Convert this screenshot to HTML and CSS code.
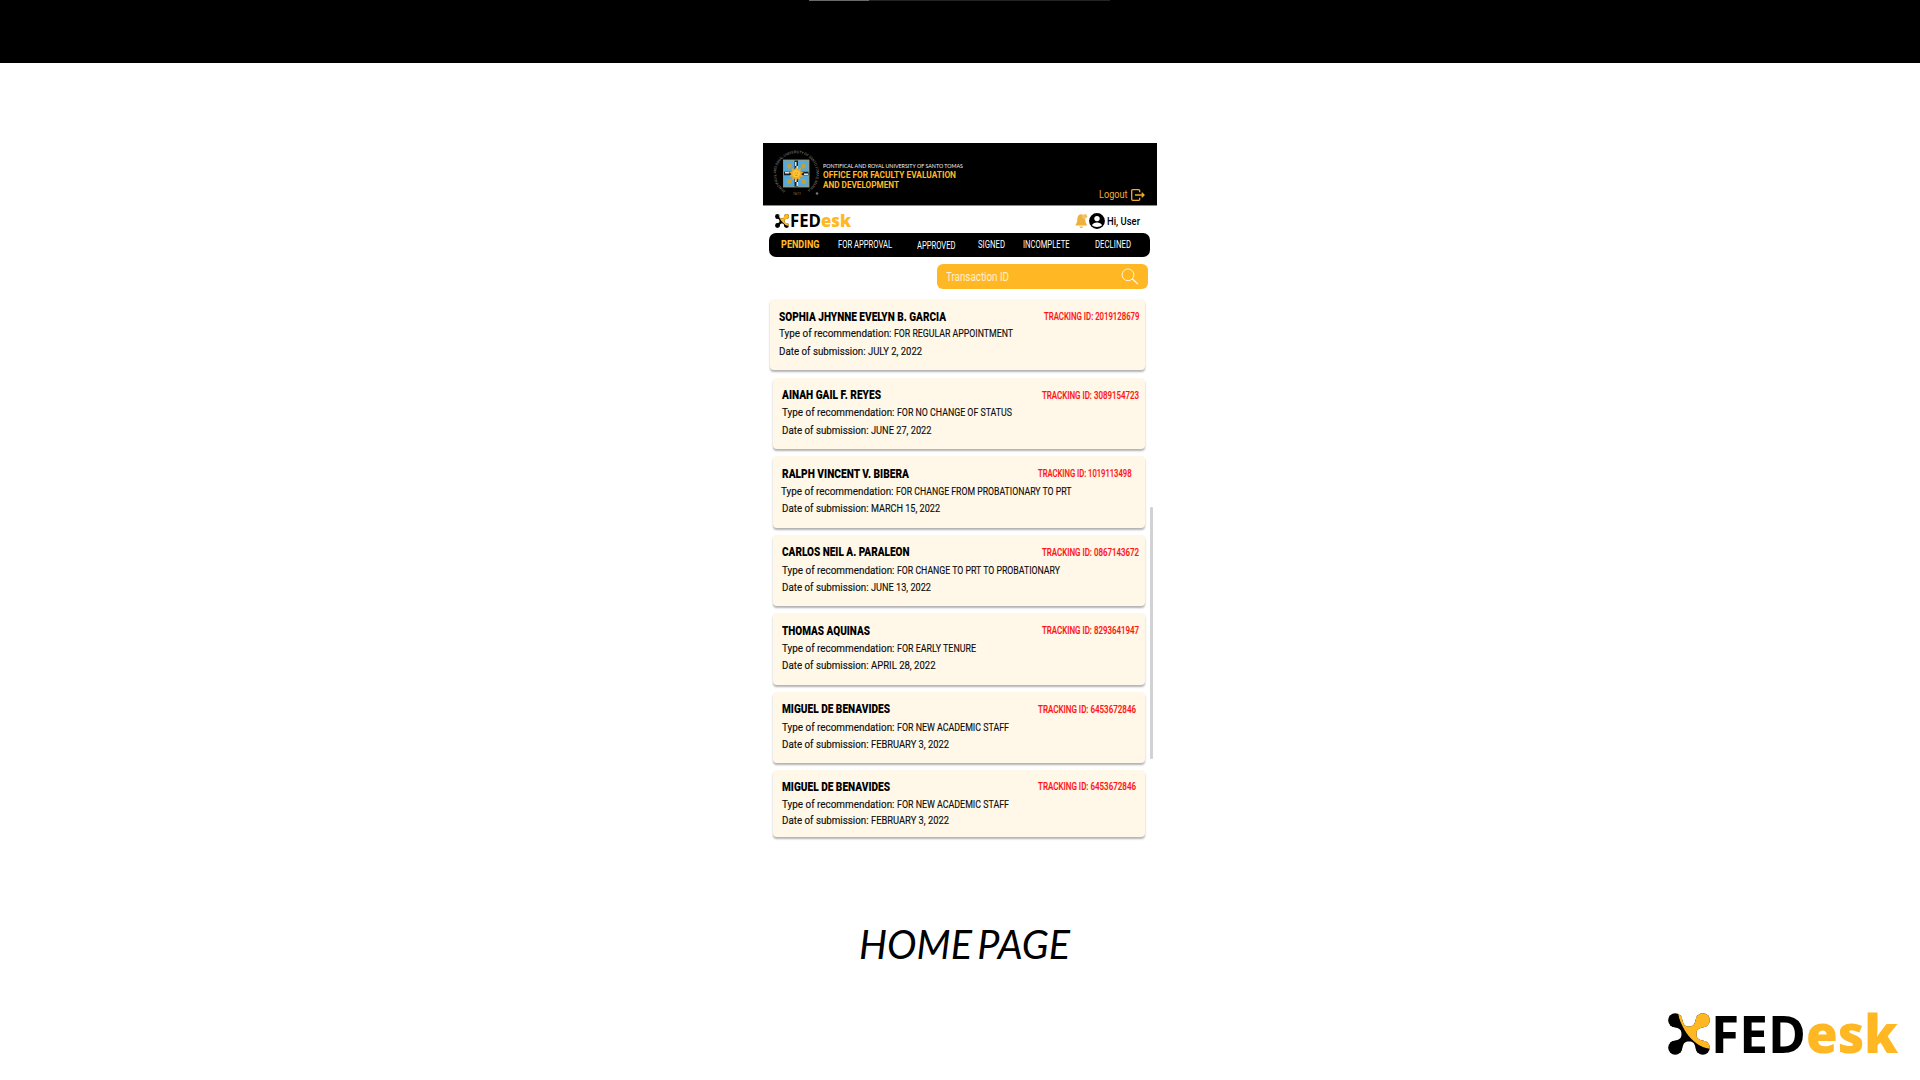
FILE: index.html
```html
<!DOCTYPE html>
<html lang="en">
<head>
<meta charset="utf-8">
<title>FEDesk - Home Page</title>
<link rel="stylesheet" href="styles.css">
</head>
<body>
<svg width="0" height="0" class="defs" aria-hidden="true">
  <defs>
    <clipPath id="swoosh"><path d="M10 0C14 18 26 34 43 36V0Z"/></clipPath>
    <g id="knot">
      <circle cx="7.2" cy="7.2" r="7"/><circle cx="34.8" cy="7.2" r="7"/><circle cx="7.2" cy="34.8" r="7"/><circle cx="34.8" cy="34.8" r="7"/>
      <path d="M12 2C16 6 13 13.500 21 13.500C29 13.500 26 6 30 2L40 12C36 16 28.500 13 28.500 21C28.500 29 36 26 40 30L30 40C26 36 29 28.500 21 28.500C13 28.500 16 36 12 40L2 30C6 26 13.500 29 13.500 21C13.500 13 6 16 2 12Z"/>
    </g>
    <symbol id="mark" viewBox="0 0 42 42">
      <use href="#knot" fill="#000"/>
      <use href="#knot" fill="#ffb824" clip-path="url(#swoosh)"/>
    </symbol>
  </defs>
</svg>

<div class="topbar"><div class="progress"><div class="progress-done"></div></div></div>

<main class="phone">
  <header class="head">
    <svg class="crest" viewBox="0 0 46 46">
      <path id="ring" d="M12.500 40.500A20.200 20.200 0 1 1 34 40.500" fill="none"/>
      <text class="ring-text"><textPath href="#ring" textLength="103">PONTIFICAL AND ROYAL UNIVERSITY OF SANTO TOMAS, MANILA</textPath></text>
      <text class="ring-text" x="20" y="44.500">1611</text>
      <rect x="10.500" y="10" width="25.500" height="27" fill="#55a9dd" stroke="#c99a3a" stroke-width=".8"/>
      <path d="M21.500 10.500h3.500v26h-3.500zM11 21.700h24.500v3.500H11z" fill="#17222a"/>
      <path d="M22 12h1.500v4H22zM23.500 16h1.500v3h-1.500zM22 29h1.500v3H22zM23.500 32h1.500v4h-1.500zM12 22h4v1.500h-4zM31 23.500h4V25h-4z" fill="#d9e5ea"/>
      <g fill="#c2a13b"><circle cx="16.300" cy="16" r="2.600"/><circle cx="30.500" cy="16" r="2.600"/><circle cx="16.300" cy="31.500" r="2.600"/><circle cx="30.500" cy="31.500" r="2.600"/></g>
      <path d="M23.300 16.500l1.600 3 3.200-1.600-.8 3.300 3.500 1-2.600 1.800 2.300 2.500-3.500.2.500 3.400-2.800-1.700-1.400 3-1.400-3-2.800 1.700.5-3.400-3.500-.2 2.300-2.500-2.600-1.800 3.500-1-.8-3.300 3.200 1.600z" fill="#f2ab22"/>
      <circle cx="23.300" cy="23.600" r="3.600" fill="#ffc53a"/>
      <path d="M21.700 23h1M24 23h1M22.200 25.300h2.200" stroke="#9a6411" stroke-width=".6"/>
      <circle cx="44" cy="43.500" r="1.300" fill="#777"/>
    </svg>
    <div class="office">
      <div class="univ"><span data-w="140">PONTIFICAL AND ROYAL UNIVERSITY OF SANTO TOMAS</span></div>
      <div class="dept"><span data-w="133">OFFICE FOR FACULTY EVALUATION</span></div>
      <div class="dept"><span data-w="76">AND DEVELOPMENT</span></div>
    </div>
    <div class="logout">
      <span data-w="28.500">Logout</span>
      <svg viewBox="0 0 14 12"><path d="M8.700 3.200V1.800Q8.700.7 7.600.7H1.800Q.7.700.7 1.800v8.400q0 1.100 1.100 1.100h5.800q1.100 0 1.100-1.100V8.800M4 6h9M10.700 3.800L13 6l-2.300 2.200" fill="none" stroke="#f0ad2c" stroke-width="1.300"/></svg>
    </div>
  </header>

  <div class="brandbar">
    <svg class="mark"><use href="#mark"/></svg>
    <div class="word"><span data-w="61">FED<b>esk</b></span></div>
    <div class="user">
      <svg class="bell" viewBox="0 0 13 16"><path d="M6 1.200C3 1.500 2.400 4 2.300 7 2.200 10 .8 11 .4 12.600h11.800C11.600 11 10.400 10 10.300 7 10.200 4 9 1.500 6 1.200zM4.300 13.400q2 3.300 4 0z" fill="#edb13c"/><circle cx="10" cy="3.200" r="2.200" fill="#e9a93a" stroke="#fff3d6" stroke-width=".6"/><path d="M10 2v2.300" stroke="#fff" stroke-width=".6"/></svg>
      <svg class="avatar" viewBox="0 0 16 16"><circle cx="8" cy="8" r="7.900"/><circle cx="8" cy="5.600" r="2.700" fill="#fff"/><path d="M2.900 12.200Q4.400 9.400 8 9.400t5.100 2.800Q11.400 14 8 14t-5.100-1.800z" fill="#fff"/></svg>
      <span data-w="33">Hi, User</span>
    </div>
  </div>

  <nav class="tabs">
    <a class="active"><span data-w="38.500">PENDING</span></a>
    <a><span data-w="54">FOR APPROVAL</span></a>
    <a class="low"><span data-w="38.500">APPROVED</span></a>
    <a><span data-w="27">SIGNED</span></a>
    <a><span data-w="46.500">INCOMPLETE</span></a>
    <a><span data-w="36">DECLINED</span></a>
  </nav>

  <div class="search">
    <span data-w="63">Transaction ID</span>
    <svg viewBox="0 0 18 17"><circle cx="7" cy="6.800" r="5.900" fill="none" stroke="#fff5df"/><path d="M11.200 10.800l5.600 5.200" stroke="#fff5df" stroke-width="1.300"/></svg>
  </div>

  <section class="list">
    <article class="card wide">
      <h2><span data-w="167">SOPHIA JHYNNE EVELYN B. GARCIA</span></h2>
      <p class="kind"><span data-w="112.500">Type of recommendation:</span> <span data-w="119">FOR REGULAR APPOINTMENT</span></p>
      <p><span data-w="86.500">Date of submission:</span> <span data-w="54">JULY 2, 2022</span></p>
      <p class="id"><span data-w="95.500">TRACKING ID: 2019128679</span></p>
    </article>
    <article class="card">
      <h2><span data-w="99">AINAH GAIL F. REYES</span></h2>
      <p><span data-w="112.500">Type of recommendation:</span> <span data-w="115">FOR NO CHANGE OF STATUS</span></p>
      <p><span data-w="86.500">Date of submission:</span> <span data-w="60.500">JUNE 27, 2022</span></p>
      <p class="id"><span data-w="97">TRACKING ID: 3089154723</span></p>
    </article>
    <article class="card inset">
      <h2><span data-w="127">RALPH VINCENT V. BIBERA</span></h2>
      <p class="kind"><span data-w="112.500">Type of recommendation:</span> <span data-w="175.500">FOR CHANGE FROM PROBATIONARY TO PRT</span></p>
      <p><span data-w="86.500">Date of submission:</span> <span data-w="69">MARCH 15, 2022</span></p>
      <p class="id"><span data-w="93.500">TRACKING ID: 1019113498</span></p>
    </article>
    <article class="card">
      <h2><span data-w="127.500">CARLOS NEIL A. PARALEON</span></h2>
      <p><span data-w="112.500">Type of recommendation:</span> <span data-w="163">FOR CHANGE TO PRT TO PROBATIONARY</span></p>
      <p><span data-w="86.500">Date of submission:</span> <span data-w="60">JUNE 13, 2022</span></p>
      <p class="id"><span data-w="97">TRACKING ID: 0867143672</span></p>
    </article>
    <article class="card">
      <h2><span data-w="88">THOMAS AQUINAS</span></h2>
      <p><span data-w="112.500">Type of recommendation:</span> <span data-w="79">FOR EARLY TENURE</span></p>
      <p><span data-w="86.500">Date of submission:</span> <span data-w="64.500">APRIL 28, 2022</span></p>
      <p class="id"><span data-w="97">TRACKING ID: 8293641947</span></p>
    </article>
    <article class="card near">
      <h2><span data-w="108">MIGUEL DE BENAVIDES</span></h2>
      <p><span data-w="112.500">Type of recommendation:</span> <span data-w="112">FOR NEW ACADEMIC STAFF</span></p>
      <p><span data-w="86.500">Date of submission:</span> <span data-w="78">FEBRUARY 3, 2022</span></p>
      <p class="id"><span data-w="98">TRACKING ID: 6453672846</span></p>
    </article>
    <article class="card near short">
      <h2><span data-w="108">MIGUEL DE BENAVIDES</span></h2>
      <p><span data-w="112.500">Type of recommendation:</span> <span data-w="112">FOR NEW ACADEMIC STAFF</span></p>
      <p><span data-w="86.500">Date of submission:</span> <span data-w="78">FEBRUARY 3, 2022</span></p>
      <p class="id"><span data-w="98">TRACKING ID: 6453672846</span></p>
    </article>
    <div class="scrollbar"></div>
  </section>
</main>

<h1 class="caption"><span data-w="211">HOME PAGE</span></h1>

<footer class="brand">
  <svg class="mark"><use href="#mark"/></svg>
  <div class="word"><span data-w="187">FED<b>esk</b></span></div>
</footer>
<script src="fit.js"></script>
</body>
</html>
```
FILE: styles.css
```css
* { box-sizing: border-box; margin: 0; padding: 0; }
body {
  width: 1920px;
  height: 1080px;
  overflow: hidden;
  background: #fff;
  color: #000;
  font-family: Roboto, "Liberation Sans", sans-serif;
}
svg { display: block; flex: none; }
.defs { position: absolute; }
[data-w] { display: inline-block; white-space: nowrap; transform-origin: 0 50%; }

.topbar { height: 63px; background: #000; }
.progress { width: 301px; height: 1px; margin-left: 809px; background: #242424; }
.progress-done { width: 60px; height: 1px; background: #6a6a6a; }

.phone { width: 394px; height: 701px; margin: 80px auto 0; }

.head {
  display: flex;
  height: 63px;
  padding: 6px 12px 0 10px;
  background: #000;
  border-bottom: 1px solid #8a8a8a;
}
.crest { width: 46px; height: 46px; margin-top: 1px; }
.ring-text { font-size: 3.6px; fill: #858585; }
.office { margin: 13px 0 0 4px; color: #ffb824; }
.univ { height: 7.5px; line-height: 8px; font-family: Lato, sans-serif; font-size: 5.5px; color: #f4f4f4; }
.dept { height: 10px; line-height: 10px; font-size: 8.4px; font-weight: 700; }
.logout {
  display: flex;
  gap: 4px;
  align-items: center;
  height: 14px;
  margin: 38.500px 0 0 auto;
  font-size: 10.8px;
  color: #f0ad2c;
}
.logout svg { width: 14px; height: 12px; }

.brandbar { display: flex; align-items: flex-start; height: 27px; padding: 8px 17px 0 12px; }
.brandbar .mark { width: 14px; height: 14px; }
.word { font-family: "Open Sans", "Noto Sans", sans-serif; font-weight: 700; }
.word b { color: #ffb824; }
.brandbar .word { margin: -2px 0 0 1px; font-size: 17.5px; line-height: 16px; }
.user { display: flex; align-items: center; height: 16px; margin: -1px 0 0 auto; font-size: 11.4px; font-weight: 500; }
.bell { width: 13px; height: 16px; }
.avatar { width: 16px; height: 16px; margin: 0 2px 0 1px; }

.tabs {
  display: grid;
  grid-template-columns: 57px 79px 61px 45px 72px 1fr;
  width: 381px;
  height: 24px;
  margin-left: 6px;
  padding-left: 12px;
  border-radius: 7px;
  background: #000;
  color: #fff;
  font-size: 10px;
  line-height: 24px;
}
.tabs .active { color: #ffb824; font-weight: 800; }
.tabs .low { padding-top: 1px; }

.search {
  display: flex;
  align-items: center;
  justify-content: space-between;
  width: 210.500px;
  height: 25px;
  margin: 7px 0 0 174px;
  padding: 0 8.500px 0 9px;
  border-radius: 6px;
  background: #ffb824;
  color: #fff0cc;
  font-size: 12px;
}
.search svg { width: 18px; height: 17px; margin-top: -1px; }

.list {
  position: relative;
  display: grid;
  row-gap: 7.2px;
  margin-top: 10px;
  padding: 0 12px 0 10px;
}
.card {
  display: grid;
  grid-template-columns: 1fr auto;
  grid-template-rows: repeat(3, 17.3px);
  height: 71.4px;
  padding: 9.5px 6px 0 9px;
  border-radius: 4px;
  background: #fff7e7;
  box-shadow: 0 2px 2px rgba(0, 0, 0, .3);
  font-size: 11.7px;
  line-height: 17.3px;
  color: #0c0c0c;
}
.card h2, .card p { grid-column: 1 / 3; font-size: inherit; font-weight: 400; }
.card p { -webkit-text-stroke: .15px currentColor; }
.card h2 { font-size: 12.2px; font-weight: 900; color: #000; }
.card .id { grid-column: 2; grid-row: 1; margin-top: -.5px; font-size: 10px; font-weight: 500; color: #ff1414; }
.card h2, .card .id { grid-row: 1; }
.card.wide { margin-left: -3px; }
.card.wide .kind { margin: -.5px 0 0 -.5px; }
.card.inset { padding-right: 13.5px; }
.card.inset .kind { margin-left: -1.5px; }
.card.near { padding-right: 9px; }
.card.short { grid-template-rows: 16.4px 16px 16px; height: 66.5px; padding-top: 9px; line-height: 16px; }
.scrollbar {
  position: absolute;
  top: 208px;
  right: 4px;
  width: 3px;
  height: 252px;
  border-radius: 1px;
  background: #d2d2d4;
}

.caption {
  height: 60px;
  margin: 70px 0 0 858.5px;
  font-family: Lato, "Open Sans", sans-serif;
  font-size: 40px;
  font-style: italic;
  font-weight: 400;
  line-height: 60px;
  word-spacing: -4px;
}
.brand { display: flex; margin: 39px 0 0 1667.5px; }
.brand .mark { width: 42px; height: 42px; }
.brand .word { margin: -1.5px 0 0 1px; font-size: 52.7px; line-height: 42px; }
```
FILE: fit.js
```js
document.querySelectorAll('[data-w]').forEach(function (el) {
  var target = parseFloat(el.dataset.w);
  var natural = el.getBoundingClientRect().width;
  el.style.transform = 'scaleX(' + target / natural + ')';
  el.style.marginRight = target - natural + 'px';
});
```
